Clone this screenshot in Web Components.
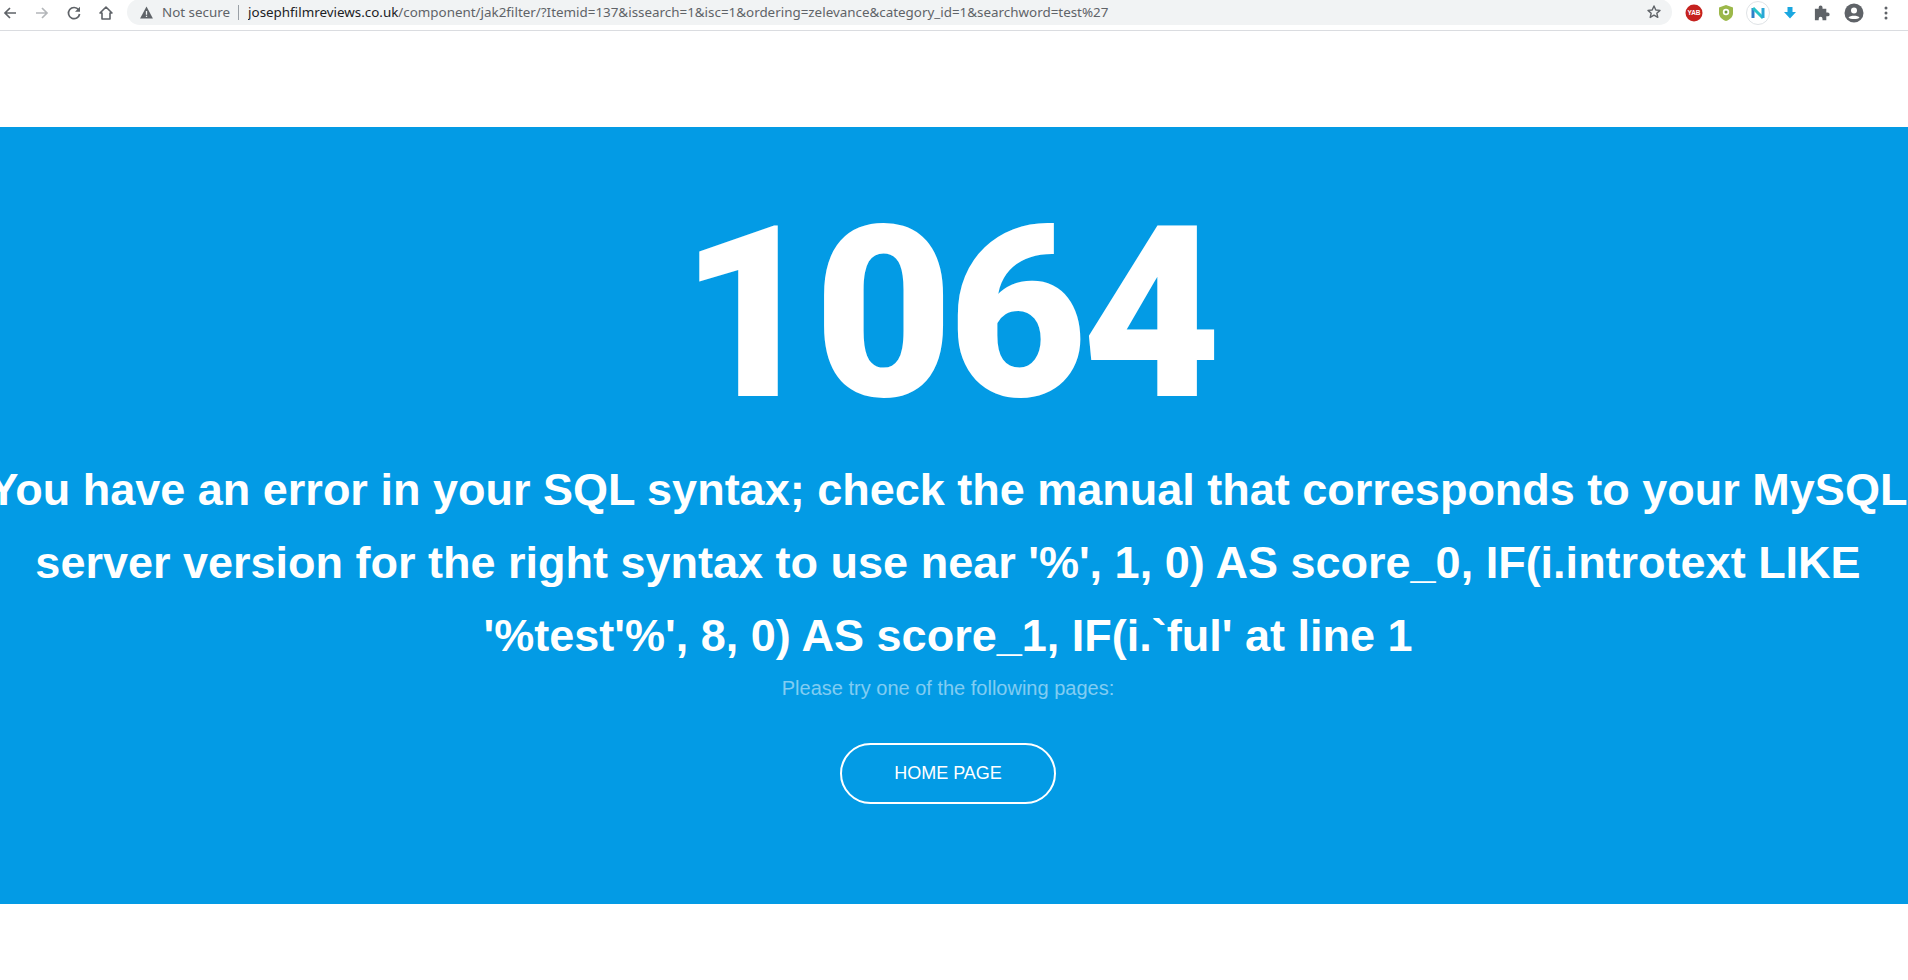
<!DOCTYPE html>
<html>
<head>
<meta charset="utf-8">
<style>
  html, body { margin: 0; height: 100%; overflow: hidden; background: #fff; }
  body { font-family: "Liberation Sans", Arial, sans-serif; }
</style>
</head>
<body>
<template id="browser-bar-template">
  <style>
    :host { display: flex; align-items: flex-start; height: 31px; box-sizing: border-box; border-bottom: 1px solid #dadce0; background: #fff; font-family: "Noto Sans", "Open Sans", sans-serif; overflow: hidden; }
    svg { display: block; flex: none; }
    .nav { display: flex; align-items: center; height: 25px; gap: 16px; padding-left: 2px; width: 127px; box-sizing: border-box; }
    .omni { flex: 1; height: 26px; margin-top: -1px; background: #f1f3f4; border-radius: 13px; display: flex; align-items: center; padding-left: 12px; font-size: 13.4px; color: #5f6368; white-space: nowrap; }
    .sec { margin-left: 8px; }
    .sep { width: 1px; height: 15px; background: #9aa0a6; margin: 0 9px 0 8px; }
    .host { color: #202124; }
    .url { flex: 1; overflow: hidden; }
    .star { margin-right: 10px; }
    .ext { display: grid; grid-template-columns: repeat(7, 32px); justify-items: center; align-items: center; height: 25px; flex: none; padding: 0 6px; }
    .yab { font: 700 6.500px "Liberation Sans", sans-serif; fill: #fff; }
  </style>
  <div class="nav">
    <svg width="16" height="16" viewBox="0 0 16 16"><path d="M14 8H3M8 3 3 8l5 5" fill="none" stroke="#5f6368" stroke-width="1.7"/></svg>
    <svg width="16" height="16" viewBox="0 0 16 16"><path d="M2 8h11M8 3l5 5-5 5" fill="none" stroke="#b4b7ba" stroke-width="1.7"/></svg>
    <svg width="16" height="16" viewBox="0 0 16 16"><path d="M12.6 4.8A5.6 5.6 0 1 0 13.6 9" fill="none" stroke="#5f6368" stroke-width="1.7"/><path d="M14 1.8v5H9z" fill="#5f6368"/></svg>
    <svg width="16" height="16" viewBox="0 0 16 16"><path d="M8 2 2 8h2v6h8V8h2z" fill="none" stroke="#5f6368" stroke-width="1.6" stroke-linejoin="round"/></svg>
  </div>
  <div class="omni">
    <svg width="15" height="15" viewBox="0 0 14 14"><path d="M7 1.5 13 12.5H1z" fill="#5f6368"/><path d="M6.4 5.5h1.2v3.6H6.4zM6.4 10h1.2v1.2H6.4z" fill="#f1f3f4"/></svg>
    <span class="sec">Not secure</span><span class="sep"></span>
    <span class="url"><span class="host">josephfilmreviews.co.uk</span>/component/jak2filter/?Itemid=137&amp;issearch=1&amp;isc=1&amp;ordering=zelevance&amp;category_id=1&amp;searchword=test%27</span>
    <svg class="star" width="16" height="16" viewBox="0 0 16 16"><path d="m8 2 1.8 4 4.2.4-3.2 2.8 1 4.2L8 11.2l-3.800 2.200 1-4.200L2 6.400 6.200 6z" fill="none" stroke="#5f6368" stroke-width="1.4" stroke-linejoin="round"/></svg>
  </div>
  <div class="ext">
    <svg width="18" height="18" viewBox="0 0 18 18"><circle cx="9" cy="9" r="8.500" fill="#c5221f"/><text class="yab" x="9" y="11.300" text-anchor="middle">YAB</text></svg>
    <svg width="16" height="18" viewBox="0 0 16 18"><path d="M8 1 15 3.500V9c0 4-3 6.500-7 8-4-1.500-7-4-7-8V3.500z" fill="#9cb84a"/><circle cx="8" cy="8" r="3.200" fill="#fff"/><circle cx="8" cy="8" r="1.500" fill="#6f9a3a"/></svg>
    <svg width="26" height="26" viewBox="0 0 26 26"><circle cx="13" cy="13" r="11.500" fill="#fff" stroke="#dfe3e6"/><path d="M8 18V8" stroke="#2f7fc8" stroke-width="3" fill="none"/><path d="M8 8l10 10" stroke="#25c2c9" stroke-width="3" fill="none"/><path d="M18 18V8" stroke="#2aa6d6" stroke-width="3" fill="none"/></svg>
    <svg width="14" height="14" viewBox="0 0 14 14"><path d="M4.500 1h5v5H13L7 12.500 1 6h3.500z" fill="#1aa7e0"/></svg>
    <svg width="18" height="18" viewBox="0 0 18 18"><path d="M2 5h4V3.500a2 2 0 0 1 4 0V5h4v4h1.500a2 2 0 0 1 0 4H14v4h-4v-1.500a2 2 0 0 0-4 0V17H2z" fill="#5f6368" transform="scale(.95)"/></svg>
    <svg width="20" height="20" viewBox="0 0 20 20"><circle cx="10" cy="10" r="9.500" fill="#5f6368"/><circle cx="10" cy="7.500" r="3" fill="#fff"/><path d="M4.500 14.500c1.500-2.500 9.500-2.500 11 0-1.500 2-9.500 2-11 0z" fill="#fff"/></svg>
    <svg width="4" height="16" viewBox="0 0 4 16"><circle cx="2" cy="3" r="1.500" fill="#5f6368"/><circle cx="2" cy="8" r="1.500" fill="#5f6368"/><circle cx="2" cy="13" r="1.500" fill="#5f6368"/></svg>
  </div>
</template>

<template id="error-panel-template">
  <style>
    :host { display: flex; flex-direction: column; align-items: center; margin-top: 96px; height: 777px; padding-right: 12px; box-sizing: border-box; background: #039be5; color: #fff; text-align: center; overflow: hidden; }
    .code { font-family: Roboto, "Liberation Sans", sans-serif; font-size: 240px; font-weight: 900; letter-spacing: -5px; line-height: 240px; margin-top: 67px; height: 239px; }
    .msg { font-size: 45px; font-weight: 700; line-height: 73px; width: 1940px; flex: none; margin-top: 20px; }
    .hint { font-size: 20px; line-height: 24px; color: rgba(255,255,255,.5); margin-top: 4px; }
    .home { display: block; margin-top: 43px; width: 216px; height: 61px; box-sizing: border-box; border: 2px solid #fff; border-radius: 31px; line-height: 57px; font-size: 18px; color: #fff; }
  </style>
  <div class="code"><slot name="code"></slot></div>
  <div class="msg"><slot name="msg"></slot></div>
  <div class="hint"><slot name="hint"></slot></div>
  <div class="home"><slot name="action"></slot></div>
</template>

<browser-bar></browser-bar>
<error-panel>
  <span slot="code">1064</span>
  <span slot="msg">You have an error in your SQL syntax; check the manual that corresponds to your MySQL server version for the right syntax to use near '%', 1, 0) AS score_0, IF(i.introtext LIKE '%test'%', 8, 0) AS score_1, IF(i.`ful' at line 1</span>
  <span slot="hint">Please try one of the following pages:</span>
  <span slot="action">HOME PAGE</span>
</error-panel>

<script>
  function fromTemplate(id) {
    return class extends HTMLElement {
      constructor() {
        super();
        const template = document.querySelector(id);
        this.attachShadow({ mode: 'open' }).appendChild(document.importNode(template.content, true));
      }
    };
  }
  customElements.define('browser-bar', fromTemplate('#browser-bar-template'));
  customElements.define('error-panel', fromTemplate('#error-panel-template'));
</script>
</body>
</html>
